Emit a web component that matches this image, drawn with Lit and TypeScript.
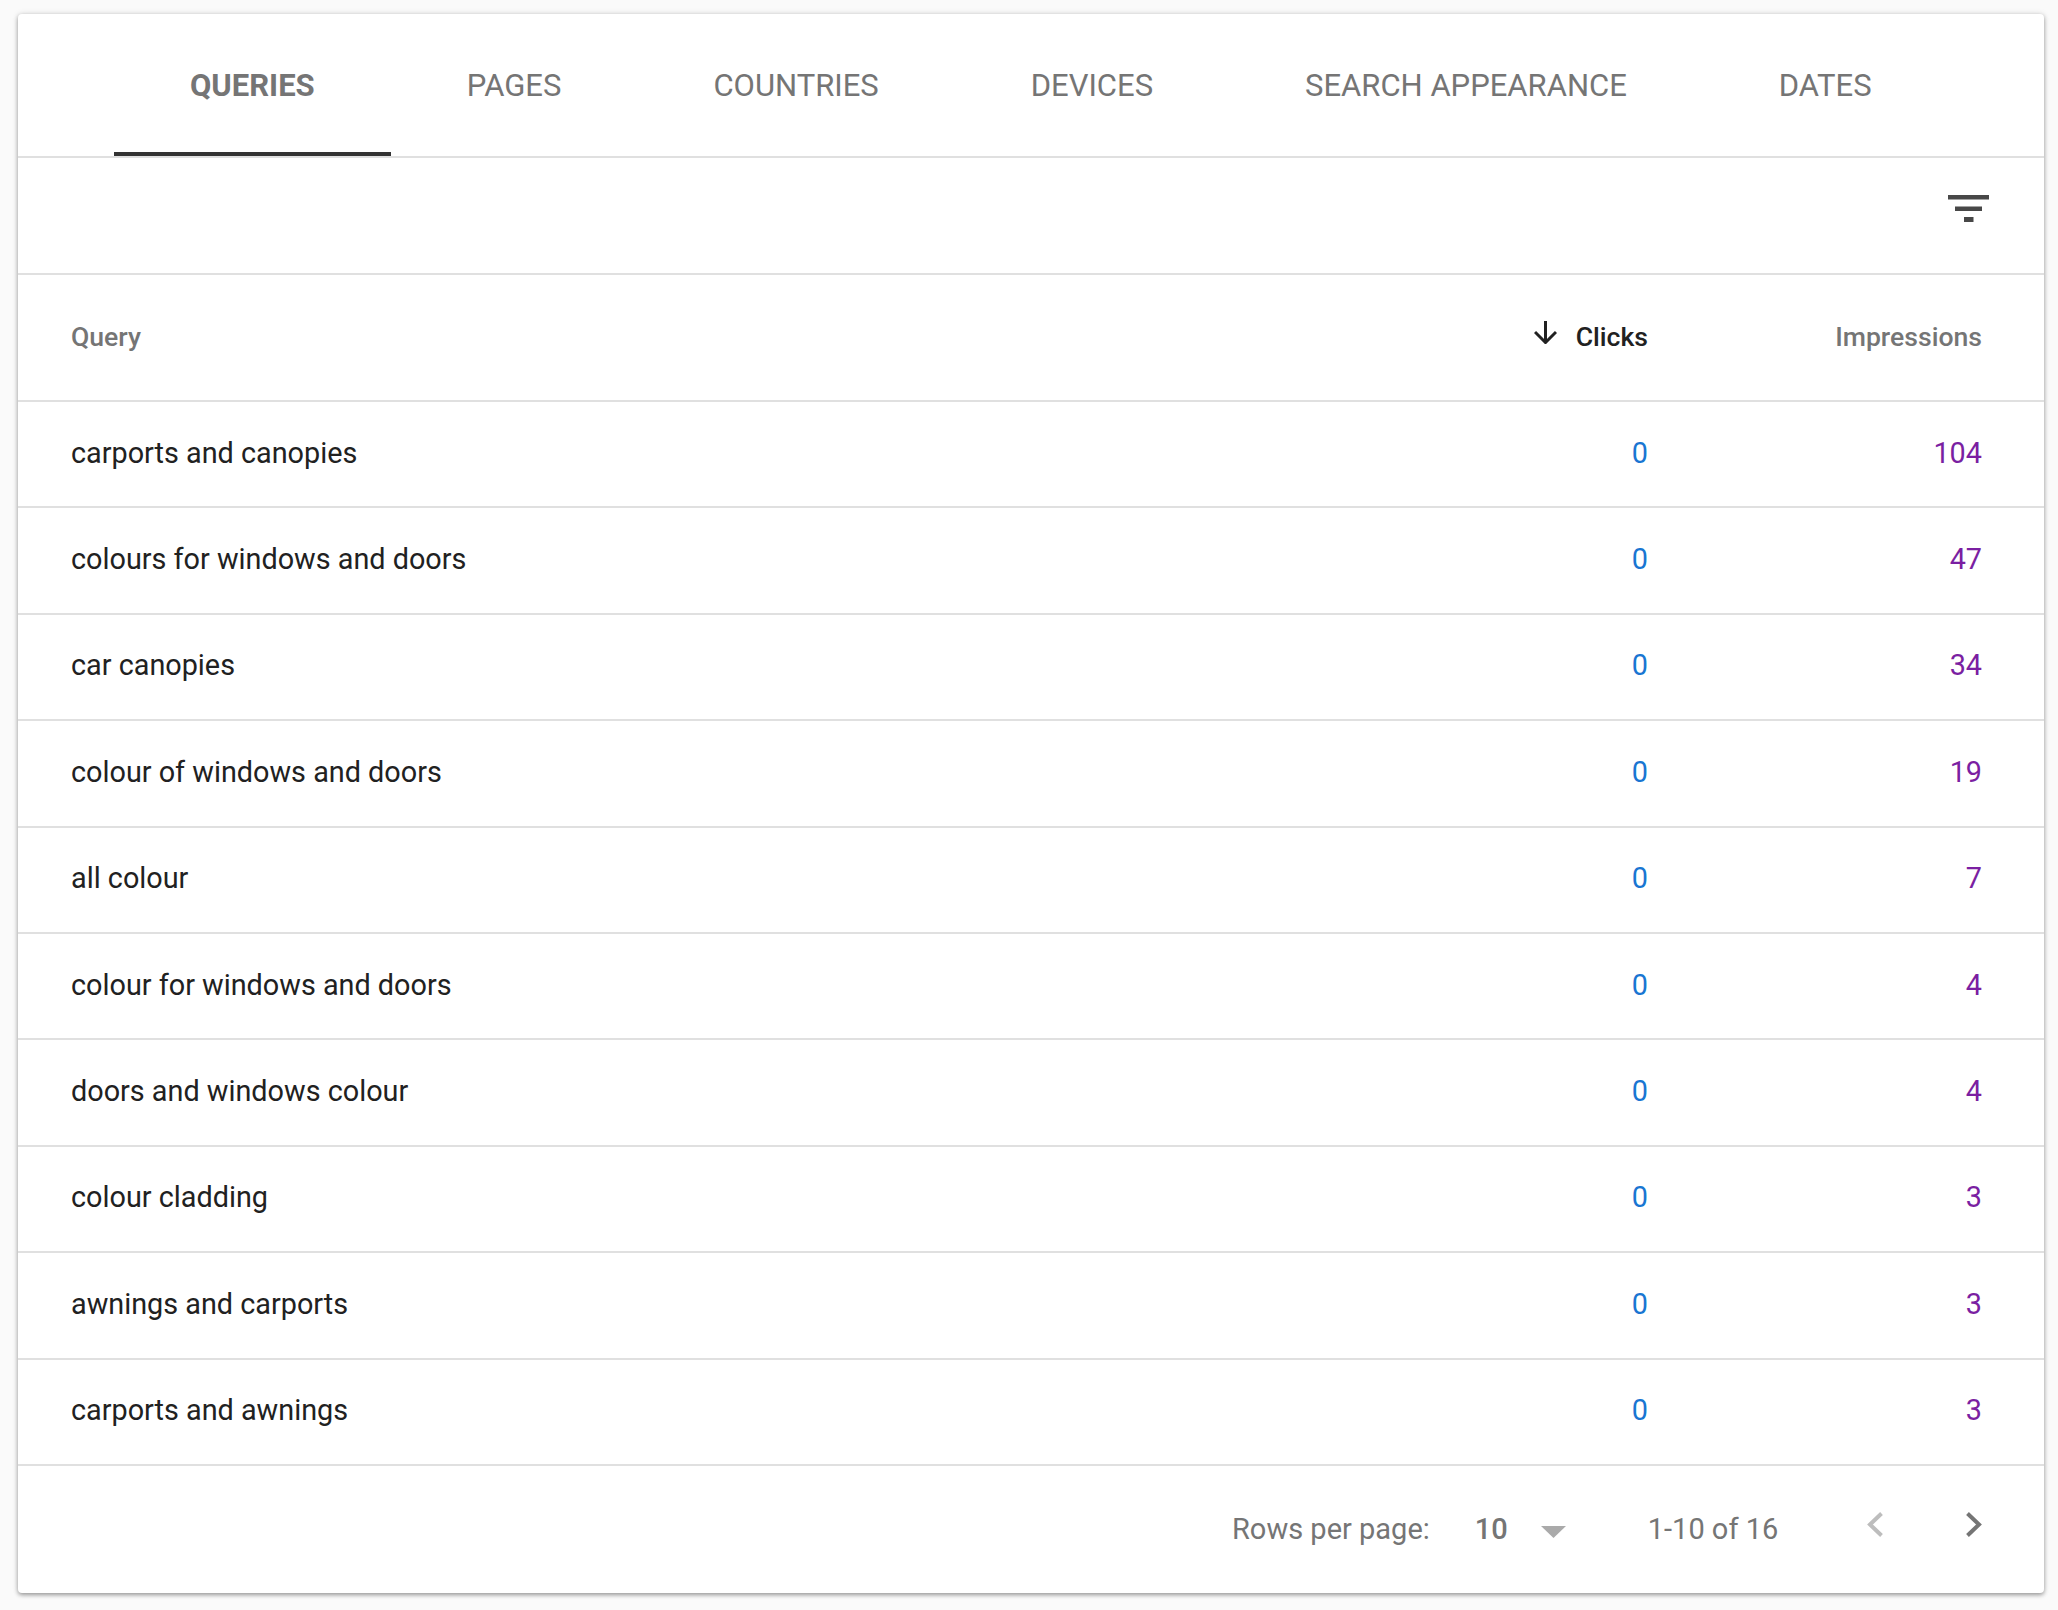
import { LitElement, html, css } from "lit";
import { customElement } from "lit/decorators.js";

const TABS = ["QUERIES", "PAGES", "COUNTRIES", "DEVICES", "SEARCH APPEARANCE", "DATES"];
const ROWS: [string, number, number][] = [
  ["carports and canopies", 0, 104],
  ["colours for windows and doors", 0, 47],
  ["car canopies", 0, 34],
  ["colour of windows and doors", 0, 19],
  ["all colour", 0, 7],
  ["colour for windows and doors", 0, 4],
  ["doors and windows colour", 0, 4],
  ["colour cladding", 0, 3],
  ["awnings and carports", 0, 3],
  ["carports and awnings", 0, 3],
];

@customElement("app-root")
export class AppRoot extends LitElement {
  static styles = css`
    :host {
      display: block;
      height: 1610px;
      background: #fafafa;
      padding: 14px 14px 17px 18px;
      box-sizing: border-box;
      font-family: Roboto, "Liberation Sans", sans-serif;
      overflow: hidden;
    }
    .card {
      background: #fff;
      height: 1579px;
      border-radius: 4px;
      box-shadow: 0 2px 4px rgba(0, 0, 0, 0.35), 0 0 6px rgba(0, 0, 0, 0.12);
      display: flex;
      flex-direction: column;
    }
    .tabs {
      height: 144px;
      box-sizing: border-box;
      border-bottom: 2px solid #e0e0e0;
      display: flex;
      padding-left: 96px;
    }
    .tab {
      padding: 4px 76px 0;
      height: 142px;
      box-sizing: border-box;
      font-size: 31px;
      color: #757575;
      display: flex;
      align-items: center;
      white-space: nowrap;
      border-bottom: 4px solid transparent;
    }
    .tab.active {
      font-weight: 700;
      border-bottom-color: #333;
    }
    .toolbar {
      height: 117px;
      box-sizing: border-box;
      border-bottom: 2px solid #e0e0e0;
      display: flex;
      justify-content: flex-end;
      padding: 37px 55px 0 0;
    }
    .row {
      display: grid;
      grid-template-columns: 1fr 300px 334px;
      align-items: center;
      box-sizing: border-box;
      height: 106.4px;
      border-bottom: 2px solid #e0e0e0;
      padding: 0 62px 3px 53px;
      font-size: 28.8px;
      color: #212121;
    }
    .head {
      height: 127px;
      padding-bottom: 2px;
      font-size: 26.6px;
      font-weight: 500;
      color: #757575;
    }
    .num { text-align: right; }
    .clicks { color: #1976d2; }
    .impr { color: #7b1fa2; }
    .sort {
      color: #212121;
      display: flex;
      justify-content: flex-end;
      align-items: center;
      gap: 19px;
    }
    .arrow { margin-bottom: 8px; }
    .footer {
      flex: 1;
      display: flex;
      align-items: center;
      font-size: 29px;
      color: #757575;
      padding-left: 1214px;
      white-space: nowrap;
    }
    .size { font-weight: 500; margin-left: 45px; }
    .caret { margin: 5px 0 0 33px; }
    .range { margin-left: 82px; }
    .nav { margin: 0 0 10px 88.500px; }
    .nav2 { margin: 0 0 10px 83px; }
    svg { display: block; flex: none; }
  `;

  render() {
    return html`
      <div class="card">
        <div class="tabs">
          ${TABS.map((t, i) => html`<div class="tab ${i === 0 ? "active" : ""}">${t}</div>`)}
        </div>
        <div class="toolbar">
          <svg width="41" height="27" viewBox="0 0 41 27">
            <path fill="#484848" d="M0 0h41v4.500H0zM7 11.500h27v4.500H7zM16 22h9.500v5H16z" />
          </svg>
        </div>
        <div class="row head">
          <div>Query</div>
          <div class="sort">
            <svg class="arrow" width="23" height="23" viewBox="0 0 23 23">
              <path fill="none" stroke="#212121" stroke-width="3" d="M11.500 0v21M1 11l10.500 10.500L22 11" />
            </svg>
            <span>Clicks</span>
          </div>
          <div class="num">Impressions</div>
        </div>
        ${ROWS.map(
          (r) => html`<div class="row">
            <div>${r[0]}</div>
            <div class="num clicks">${r[1]}</div>
            <div class="num impr">${r[2]}</div>
          </div>`
        )}
        <div class="footer">
          <span>Rows per page:</span>
          <span class="size">10</span>
          <svg class="caret" width="25" height="12" viewBox="0 0 25 12"><path fill="#aaa" d="M0 0h25L12.500 12z" /></svg>
          <span class="range">1-10 of 16</span>
          <svg class="nav" width="16" height="25" viewBox="0 0 16 25">
            <path fill="none" stroke="#bdbdbd" stroke-width="4" d="M14.500 1.500L3 12.500l11.500 11" />
          </svg>
          <svg class="nav2" width="16" height="25" viewBox="0 0 16 25">
            <path fill="none" stroke="#757575" stroke-width="4" d="M1.500 1.500L13 12.500l-11.500 11" />
          </svg>
        </div>
      </div>
    `;
  }
}
